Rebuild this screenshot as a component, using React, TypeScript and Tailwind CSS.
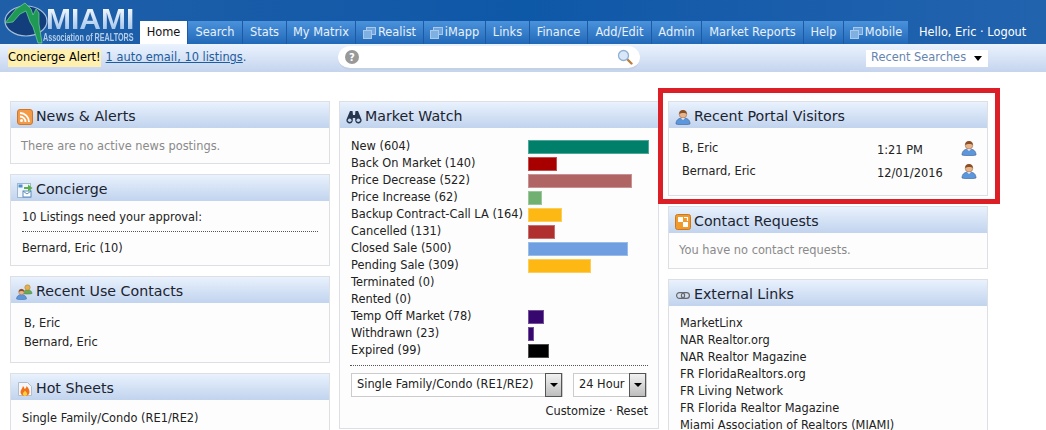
import { FC, ReactNode } from 'react';

const tabs = [
  { label: 'Search', w: 'w-[55px]' },
  { label: 'Stats', w: 'w-[44px]' },
  { label: 'My Matrix', w: 'w-[69px]' },
  { label: 'Realist', w: 'w-[68px]', popup: true },
  { label: 'iMapp', w: 'w-[62px]', popup: true },
  { label: 'Links', w: 'w-[44px]' },
  { label: 'Finance', w: 'w-[58px]' },
  { label: 'Add/Edit', w: 'w-[64px]' },
  { label: 'Admin', w: 'w-[50px]' },
  { label: 'Market Reports', w: 'w-[102px]' },
  { label: 'Help', w: 'w-[40px]' },
  { label: 'Mobile', w: 'w-[65px]', popup: true },
];

const statuses = [
  { label: 'New (604)', w: 'w-[121px]', bg: 'bg-[#00806a]' },
  { label: 'Back On Market (140)', w: 'w-[29px]', bg: 'bg-[#a80000]' },
  { label: 'Price Decrease (522)', w: 'w-[104px]', bg: 'bg-[#b06464]' },
  { label: 'Price Increase (62)', w: 'w-[14px]', bg: 'bg-[#70b070]' },
  { label: 'Backup Contract-Call LA (164)', w: 'w-[34px]', bg: 'bg-[#fdb813]' },
  { label: 'Cancelled (131)', w: 'w-[27px]', bg: 'bg-[#b03030]' },
  { label: 'Closed Sale (500)', w: 'w-[100px]', bg: 'bg-[#6f9fe0]' },
  { label: 'Pending Sale (309)', w: 'w-[63px]', bg: 'bg-[#fdb813]' },
  { label: 'Terminated (0)' },
  { label: 'Rented (0)' },
  { label: 'Temp Off Market (78)', w: 'w-[16px]', bg: 'bg-[#36076e]' },
  { label: 'Withdrawn (23)', w: 'w-[6px]', bg: 'bg-[#36076e]' },
  { label: 'Expired (99)', w: 'w-[21px]', bg: 'bg-black' },
];

const links = [
  'MarketLinx',
  'NAR Realtor.org',
  'NAR Realtor Magazine',
  'FR FloridaRealtors.org',
  'FR Living Network',
  'FR Florida Realtor Magazine',
  'Miami Association of Realtors (MIAMI)',
];

const PopupIcon = () => (
  <svg width="13" height="12" viewBox="0 0 13 12" className="mr-[2px] shrink-0">
    <rect x="3.500" y="0.500" width="9" height="7" fill="#6fa5dc" stroke="#a9c8ea" />
    <rect x="0.500" y="3.500" width="8" height="8" fill="#7fb0e2" stroke="#a9c8ea" />
  </svg>
);

const PersonIcon = () => (
  <svg width="16" height="16" viewBox="0 0 16 16">
    <path d="M1 15c0-4 2.500-6 7-6s7 2 7 6c-3 1-11 1-14 0z" fill="#5c97dd" stroke="#47699a" strokeWidth="0.700" />
    <path d="M6 9l2 2 2-2z" fill="#fff" />
    <circle cx="8" cy="5.200" r="3.800" fill="#e8b48c" stroke="#a0714c" strokeWidth="0.600" />
    <path d="M4.200 5c0-3 1.800-4 3.800-4s3.800 1 3.800 4C10.500 3.500 6 3.500 4.200 5z" fill="#8a4f26" />
  </svg>
);

const RssIcon = () => (
  <svg width="16" height="16" viewBox="0 0 16 16">
    <rect x="0.500" y="0.500" width="15" height="15" rx="2.500" fill="#f49a45" stroke="#d0762a" />
    <circle cx="4.500" cy="11.500" r="1.500" fill="#fff" />
    <path d="M3 7.500a5.500 5.500 0 0 1 5.500 5.500M3 4a9 9 0 0 1 9 9" fill="none" stroke="#fff" strokeWidth="1.800" />
  </svg>
);

const ConciergeIcon = () => (
  <svg width="16" height="16" viewBox="0 0 16 16">
    <rect x="0.500" y="1.500" width="13" height="14" fill="#eef5fb" stroke="#9fb6cc" />
    <rect x="1.500" y="2.500" width="4" height="3" fill="#4f8fd0" />
    <rect x="6" y="9" width="8" height="6" fill="#fff" stroke="#5b8cc0" />
    <path d="M6 9l4 3 4-3" fill="none" stroke="#5b8cc0" />
    <path d="M7 5h4V2.500L15.500 6 11 9.500V7H7z" fill="#59b04a" />
  </svg>
);

const ContactsIcon = () => (
  <svg width="17" height="16" viewBox="0 0 17 16">
    <path d="M7 9.500c0-2.500 2-3.500 4.500-3.500s4.500 1 4.500 3.500c-2 .8-7 .8-9 0z" fill="#63ad55" stroke="#4a7a40" strokeWidth="0.500" />
    <circle cx="11.500" cy="3.500" r="2.700" fill="#e5b04f" stroke="#a87a2c" strokeWidth="0.500" />
    <path d="M0.500 15c0-3 2.500-4.500 5-4.500s5 1.500 5 4.500c-2.500 1-7.500 1-10 0z" fill="#5c97dd" stroke="#47699a" strokeWidth="0.500" />
    <circle cx="5.500" cy="8" r="2.800" fill="#e8b48c" stroke="#a0714c" strokeWidth="0.500" />
    <path d="M2.800 8c0-2.200 1.300-3 2.700-3s2.700.8 2.700 3C7 6.800 4 6.800 2.800 8z" fill="#8a4f26" />
  </svg>
);

const HotIcon = () => (
  <svg width="16" height="16" viewBox="0 0 16 16">
    <path d="M1.500 1.500h9l4 4v9h-13z" fill="#f6f7f9" stroke="#b5bcc6" />
    <path d="M8 15c-3 0-4.500-2-4.500-4S5.500 7.500 6 5c1 1 1.500 2 1.500 3C9 7.500 9.500 6 9.500 5c2 2 3 4 3 6s-1.500 4-4.500 4z" fill="#f0701c" />
    <path d="M8 15c-1.500 0-2.200-1-2.200-2.200S7.500 11 8 9.500c.8 1.300 2.200 2 2.200 3.300S9.500 15 8 15z" fill="#fbd040" />
  </svg>
);

const BinocularsIcon = () => (
  <svg width="16" height="14" viewBox="0 0 16 14">
    <path d="M4 1h2.500l.5 4h2l.5-4H12l3.500 8.500a3.200 3.200 0 1 1-6.300.8V8H6.800v2.300a3.200 3.200 0 1 1-6.300-.8z" fill="#27364f" />
    <circle cx="3.700" cy="10.200" r="1.800" fill="#c5d8f0" />
    <circle cx="12.300" cy="10.200" r="1.800" fill="#c5d8f0" />
  </svg>
);

const RequestIcon = () => (
  <svg width="16" height="16" viewBox="0 0 16 16">
    <rect x="0.500" y="0.500" width="15" height="15" rx="2" fill="#f09a2e" stroke="#cf7818" />
    <rect x="3" y="3" width="5" height="5" fill="#fff" />
    <rect x="8" y="8" width="5" height="5" fill="#fff" />
    <path d="M9 3.500h3.500V7" fill="none" stroke="#fff" strokeWidth="1.200" />
  </svg>
);

const LinkIcon = () => (
  <svg width="14" height="7" viewBox="0 0 14 7">
    <rect x="0.600" y="0.600" width="8" height="5.800" rx="2.900" fill="none" stroke="#666" strokeWidth="1.200" />
    <rect x="5.400" y="0.600" width="8" height="5.800" rx="2.900" fill="none" stroke="#666" strokeWidth="1.200" />
  </svg>
);

const SearchIcon = () => (
  <svg width="16" height="16" viewBox="0 0 16 16">
    <path d="M9.500 9.500l5 5" stroke="#b9803f" strokeWidth="2.400" strokeLinecap="round" />
    <circle cx="6.500" cy="6.500" r="5" fill="#d8e8f8" stroke="#8fb1d3" strokeWidth="1.300" />
  </svg>
);

const SelectButton = () => (
  <span className="flex h-[24px] w-[17px] shrink-0 items-center justify-center border border-[#555] bg-gradient-to-b from-[#f2f2f2] to-[#bdbdbd]">
    <span className="h-0 w-0 border-x-[4px] border-t-[4px] border-x-transparent border-t-black" />
  </span>
);

interface CardProps {
  title: string;
  icon: ReactNode;
  children: ReactNode;
  className?: string;
}

const Card: FC<CardProps> = ({ title, icon, children, className = '' }) => (
  <section className={`border border-[#dcdfe3] bg-[#fdfdfd] ${className}`}>
    <h2 className="flex h-[26px] items-center gap-[3px] bg-gradient-to-b from-[#e9f2fd] to-[#c1d3ee] pl-[5px] pt-[4px] text-[14.200px] font-normal text-[#1b2430]">
      <span className="flex w-[17px] shrink-0 justify-center">{icon}</span>
      {title}
    </h2>
    {children}
  </section>
);

const Logo = () => (
  <div className="relative h-[44px] w-[140px] shrink-0">
    <svg width="50" height="44" viewBox="0 0 50 44" className="absolute left-0 top-0">
      <ellipse cx="26" cy="21" rx="21" ry="15" fill="#123f7c" stroke="#a8c0da" strokeWidth="1.200" />
      <path d="M5 23L16 9 25 3 31 9 33 15 36 9 39 13 39 24 42 43 38 43 33 27 30 22 26 11 20 14 13 22z" fill="#1f9a55" stroke="#8fdca8" strokeWidth="0.600" />
    </svg>
    <span className="absolute left-[46px] top-[5px] bg-gradient-to-b from-white to-[#9cc0e8] bg-clip-text font-['Liberation_Sans',Arial,sans-serif] text-[30px] font-bold leading-[27px] text-transparent">
      MIAMI
    </span>
    <span className="absolute left-[43px] top-[32px] origin-left scale-x-[0.72] whitespace-nowrap font-['Liberation_Sans',Arial,sans-serif] text-[10px] font-bold leading-[12px] text-[#b5cde8]">
      Association of REALTORS
    </span>
  </div>
);

export default function App() {
  return (
    <div className="relative h-[430px] w-[1046px] overflow-hidden bg-white font-['DejaVu_Sans',Verdana,sans-serif] text-[11.400px] text-[#222]">
      <header className="flex h-[44px] bg-gradient-to-r from-[#1f5fa8] via-[#0e58a8] to-[#2263ae]">
        <Logo />
        <nav className="flex h-[23px] self-end">
          <a className="flex w-[47px] items-center justify-center bg-white pt-[1px] text-[#111]">Home</a>
          {tabs.map(tab => (
            <a
              key={tab.label}
              className={`flex ${tab.w} items-center justify-center whitespace-nowrap border-l border-[#1c5ba3] bg-gradient-to-b from-[#4b92dc] to-[#2069b8] pt-[1px] text-[#e8f1fb]`}
            >
              {tab.popup && <PopupIcon />}
              {tab.label}
            </a>
          ))}
        </nav>
        <span className="ml-[11px] self-end whitespace-nowrap pb-[3px] text-white">Hello, Eric · Logout</span>
      </header>

      <div className="flex h-[28px] items-center bg-gradient-to-b from-[#eaf3fe] to-[#c5d4ee] pl-[8px]">
        <span className="flex w-[330px] shrink-0 items-center">
          <span className="bg-[#fff0b0] text-black">Concierge Alert!</span>
          <a className="ml-[5px] text-[#1d5c9e] underline">1 auto email, 10 listings</a>
          <span className="text-[#1d5c9e]">.</span>
        </span>
        <div className="flex h-[24px] w-[302px] items-center justify-between rounded-full border-b-2 border-[#c4d0e4] bg-white px-[7px]">
          <span className="flex h-[14px] w-[14px] items-center justify-center rounded-full bg-[#999] text-[10px] font-bold text-white">?</span>
          <SearchIcon />
        </div>
        <div className="ml-[226px] flex h-[17px] w-[122px] items-center justify-between bg-white pl-[5px] pr-[6px] text-[#6684b0]">
          Recent Searches
          <span className="h-0 w-0 border-x-[4px] border-t-[5px] border-x-transparent border-t-black" />
        </div>
      </div>

      <main className="grid grid-cols-[320px_320px_320px] items-start gap-x-[9px] pl-[10px] pt-[29px]">
        <div className="flex flex-col gap-[10px]">
          <Card title="News & Alerts" icon={<RssIcon />}>
            <p className="h-[35px] pl-[10px] pt-[11px] leading-[14px] text-[#8a8a8a]">There are no active news postings.</p>
          </Card>
          <Card title="Concierge" icon={<ConciergeIcon />}>
            <p className="mx-[11px] mt-[9px] border-b border-dotted border-[#555] pb-[7px] leading-[14px]">10 Listings need your approval:</p>
            <p className="h-[33px] pl-[11px] pt-[9px] leading-[14px]">Bernard, Eric (10)</p>
          </Card>
          <Card title="Recent Use Contacts" icon={<ContactsIcon />}>
            <div className="flex h-[59px] flex-col gap-[5px] pl-[13px] pt-[13px]">
              <a className="leading-[14px]">B, Eric</a>
              <a className="leading-[14px]">Bernard, Eric</a>
            </div>
          </Card>
          <Card title="Hot Sheets" icon={<HotIcon />}>
            <div className="flex flex-col gap-[3px] pl-[11px] pt-[11px]">
              <a className="leading-[14px]">Single Family/Condo (RE1/RE2)</a>
              <a className="leading-[14px]">BIN Buy Issues</a>
            </div>
          </Card>
        </div>

        <Card title="Market Watch" icon={<BinocularsIcon />} className="h-[328px]">
          <div className="mx-[10px] mt-[10px] border-b border-dotted border-[#555] pb-[6px] pl-[1px]">
            {statuses.map(s => (
              <div key={s.label} className="flex h-[17px] items-center">
                <span className="w-[177px] shrink-0 whitespace-nowrap">{s.label}</span>
                {s.w && <span className={`h-[14px] shrink-0 border border-white/30 ${s.w} ${s.bg}`} />}
              </div>
            ))}
          </div>
          <div className="ml-[11px] mt-[7px] flex gap-[10px]">
            <div className="flex h-[24px] w-[212px] items-center justify-between border border-[#ccc] bg-white pl-[5px]">
              Single Family/Condo (RE1/RE2)
              <SelectButton />
            </div>
            <div className="flex h-[24px] w-[74px] items-center justify-between border border-[#ccc] bg-white pl-[5px]">
              24 Hour
              <SelectButton />
            </div>
          </div>
          <p className="mr-[10px] mt-[7px] text-right leading-[14px]">Customize · Reset</p>
        </Card>

        <div className="flex flex-col gap-[10px]">
          <Card title="Recent Portal Visitors" icon={<PersonIcon />} className="h-[95px]">
            <div className="grid grid-cols-[195px_84px_16px] auto-rows-[16px] items-center gap-y-[7px] pl-[13px] pt-[12px]">
              <span className="pt-[2px]">B, Eric</span>
              <span className="pt-[6px]">1:21 PM</span>
              <PersonIcon />
              <span className="pt-[2px]">Bernard, Eric</span>
              <span className="pt-[6px]">12/01/2016</span>
              <PersonIcon />
            </div>
          </Card>
          <Card title="Contact Requests" icon={<RequestIcon />}>
            <p className="h-[35px] pl-[10px] pt-[10px] leading-[14px] text-[#8a8a8a]">You have no contact requests.</p>
          </Card>
          <Card title="External Links" icon={<LinkIcon />}>
            <div className="pl-[11px] pt-[9px]">
              {links.map(link => (
                <a key={link} className="block h-[17px] leading-[17px]">{link}</a>
              ))}
            </div>
          </Card>
        </div>
      </main>

      <div className="absolute left-[658px] top-[88px] h-[116px] w-[342px] border-[5px] border-[#dc1f26]" />
    </div>
  );
}
